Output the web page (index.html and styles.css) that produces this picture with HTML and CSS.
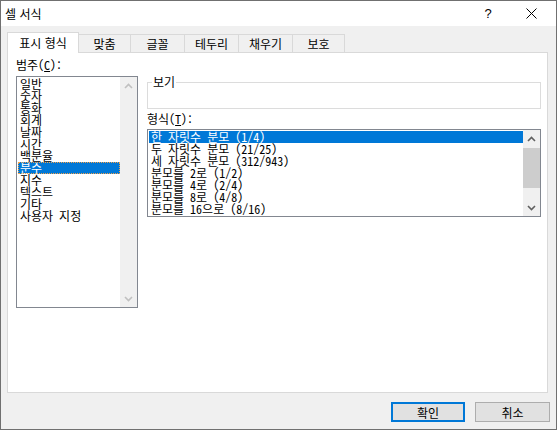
FILE: index.html
```html
<!DOCTYPE html>
<html lang="ko">
<head>
<meta charset="utf-8">
<title>셀 서식</title>
<link rel="stylesheet" href="styles.css">
</head>
<body>
<div class="window">
  <div class="titlebar">
    <span class="title">셀 서식</span>
    <span class="ctrl help">?</span>
    <span class="ctrl close"><svg width="11" height="11" viewBox="0 0 11 11"><path d="M0.5 0.5 L10.5 10.5 M10.5 0.5 L0.5 10.5" stroke="#000" stroke-width="1" fill="none"/></svg></span>
  </div>
  <div class="body">
    <div class="tabs">
      <div class="tab active w1">표시 형식</div>
      <div class="tab w2">맞춤</div>
      <div class="tab w3">글꼴</div>
      <div class="tab w3">테두리</div>
      <div class="tab w3">채우기</div>
      <div class="tab w2">보호</div>
    </div>
    <div class="panel">
      <div class="left">
        <div class="label lbl-cat">범주(<u>C</u>):</div>
        <div class="listbox cat">
          <div class="items">
            <div class="item">일반</div>
            <div class="item">숫자</div>
            <div class="item">통화</div>
            <div class="item">회계</div>
            <div class="item">날짜</div>
            <div class="item">시간</div>
            <div class="item">백분율</div>
            <div class="item sel focus">분수</div>
            <div class="item">지수</div>
            <div class="item">텍스트</div>
            <div class="item">기타</div>
            <div class="item">사용자 지정</div>
          </div>
          <div class="vscroll disabled">
            <div class="sbtn"><svg width="9" height="6" viewBox="0 0 9 6"><path d="M1 5 L4.5 1.5 L8 5" stroke="currentColor" stroke-width="1.6" fill="none"/></svg></div>
            <div class="track"></div>
            <div class="sbtn"><svg width="9" height="6" viewBox="0 0 9 6"><path d="M1 1 L4.5 4.5 L8 1" stroke="currentColor" stroke-width="1.6" fill="none"/></svg></div>
          </div>
        </div>
      </div>
      <div class="right">
        <fieldset class="group">
          <legend>보기</legend>
          <div class="group-body"></div>
        </fieldset>
        <div class="label lbl-fmt">형식(<u>T</u>):</div>
        <div class="listbox fmt">
          <div class="items">
            <div class="item sel">한 자릿수 분모 (1/4)</div>
            <div class="item">두 자릿수 분모 (21/25)</div>
            <div class="item">세 자릿수 분모 (312/943)</div>
            <div class="item">분모를 2로 (1/2)</div>
            <div class="item">분모를 4로 (2/4)</div>
            <div class="item">분모를 8로 (4/8)</div>
            <div class="item">분모를 16으로 (8/16)</div>
          </div>
          <div class="vscroll">
            <div class="sbtn"><svg width="9" height="6" viewBox="0 0 9 6"><path d="M1 5 L4.5 1.5 L8 5" stroke="currentColor" stroke-width="1.6" fill="none"/></svg></div>
            <div class="track"><div class="thumb"></div></div>
            <div class="sbtn"><svg width="9" height="6" viewBox="0 0 9 6"><path d="M1 1 L4.5 4.5 L8 1" stroke="currentColor" stroke-width="1.6" fill="none"/></svg></div>
          </div>
        </div>
      </div>
    </div>
    <div class="buttons">
      <div class="btn default">확인</div>
      <div class="btn cancel">취소</div>
    </div>
  </div>
</div>
</body>
</html>
```
FILE: styles.css
```css
* { box-sizing: border-box; }
html, body { margin: 0; padding: 0; }
body {
  font-family: "Noto Sans CJK KR", "Noto Sans", sans-serif;
  font-size: 12px;
  color: #000;
  background: #fff;
}
.window {
  width: 557px;
  height: 430px;
  border: 1px solid #707070;
  background: #f0f0f0;
  display: flex;
  flex-direction: column;
}
.titlebar {
  flex: none;
  height: 25px;
  background: #fff;
  display: flex;
  align-items: center;
}
.title {
  flex: 1;
  margin-left: 4px;
  line-height: 16px;
}
.ctrl {
  display: flex;
  justify-content: center;
  align-items: center;
  height: 25px;
}
.help { width: 40px; font-size: 13px; font-family: "Liberation Sans", sans-serif; }
.close { width: 46px; margin-right: 2px; }

.body {
  flex: 1;
  display: flex;
  flex-direction: column;
  padding: 6px 6px 7px 6px;
}
.tabs {
  display: flex;
  align-items: flex-end;
  height: 20px;
}
.tab {
  height: 18px;
  border: 1px solid #d9d9d9;
  border-bottom: none;
  margin-left: -1px;
  text-align: center;
  line-height: 17px;
  background: #f0f0f0;
}
.tab:first-child { margin-left: 0; }
.tab.active {
  height: 21px;
  margin-bottom: -1px;
  background: #fff;
  line-height: 19px;
  position: relative;
  z-index: 1;
}
.w1 { width: 72px; }
.w2 { width: 53px; }
.w3 { width: 55px; }

.panel {
  flex: none;
  height: 341px;
  margin-right: 2px;
  background: #fff;
  border: 1px solid #d9d9d9;
  display: flex;
  gap: 9px;
  padding: 4px 0 0 8px;
  font-feature-settings: "hwid" 1;
}
.left {
  width: 122px;
  display: flex;
  flex-direction: column;
}
.label {
  height: 16px;
  line-height: 16px;
}
.lbl-cat { margin-bottom: 3px; }
.listbox {
  border: 1px solid #828790;
  background: #fff;
  display: flex;
}
.cat { height: 232px; }
.items {
  flex: 1;
  padding: 1px 0 0 1px;
  min-width: 0;
}
.item {
  height: 12px;
  line-height: 12px;
  padding-left: 2px;
  white-space: nowrap;
}
.item.sel {
  background: #0078d7;
  color: #fff;
}
.item.focus {
  outline: 1px dotted #f3a24a;
  outline-offset: -1px;
}
.vscroll {
  width: 17px;
  flex: none;
  background: #f0f0f0;
  display: flex;
  flex-direction: column;
  color: #606060;
}
.vscroll.disabled { color: #c0c0c0; }
.sbtn {
  height: 17px;
  flex: none;
  display: flex;
  align-items: center;
  justify-content: center;
}
.track { flex: 1; }
.thumb {
  margin-top: 1px;
  height: 40px;
  background: #cdcdcd;
}

.right {
  width: 394px;
  display: flex;
  flex-direction: column;
}
.group {
  margin: 17px 0 0 0;
  padding: 0;
  border: 1px solid #dcdcdc;
  min-width: 0;
}
.group legend {
  margin-left: 4px;
  padding: 0 1px;
  line-height: 16px;
}
.group-body { height: 18px; }
.lbl-fmt { margin-top: 2px; margin-bottom: 2px; }
.fmt { height: 88px; }

.buttons {
  display: flex;
  justify-content: flex-end;
  gap: 10px;
  margin-top: 9px;
}
.btn {
  height: 20px;
  background: #e1e1e1;
  display: flex;
  align-items: center;
  justify-content: center;
}
.btn.default { width: 74px; border: 2px solid #0078d7; }
.btn.cancel { width: 75px; border: 1px solid #adadad; }
```
